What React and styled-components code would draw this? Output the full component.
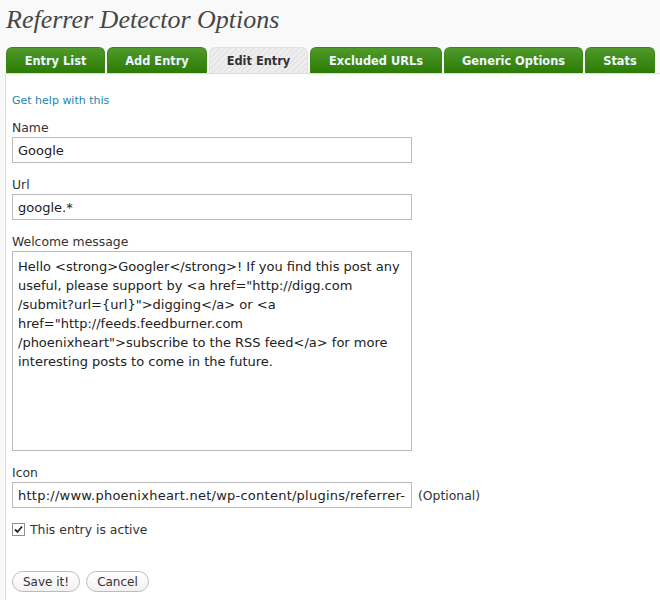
import React from "react";
import styled, { createGlobalStyle } from "styled-components";

const GlobalStyle = createGlobalStyle`
  body {
    margin: 0;
    background: #f9f9f9;
    font-family: "DejaVu Sans", Verdana, sans-serif;
    color: #333;
  }
`;

const Page = styled.div`
  width: 660px;
  height: 600px;
  overflow: hidden;
`;

const Title = styled.h2`
  margin: 0;
  padding: 5px 0 0 6px;
  height: 42px;
  box-sizing: border-box;
  font-family: "Liberation Serif", Georgia, serif;
  font-style: italic;
  font-weight: normal;
  font-size: 26px;
  color: #464646;
`;

const Tabs = styled.ul`
  display: flex;
  gap: 2px;
  list-style: none;
  margin: 5px 0 0 6px;
  padding: 0;
  height: 26px;
`;

const Tab = styled.li`
  width: ${(p) => p.$w}px;
  box-sizing: border-box;
  display: flex;
  align-items: center;
  justify-content: center;
  border-radius: 6px 6px 0 0;
  font-size: 11.4px;
  font-weight: bold;
  padding-top: 1px;
  color: ${(p) => (p.$active ? "#333" : "#eef6ff")};
  background: ${(p) =>
    p.$active
      ? "repeating-linear-gradient(135deg, #efefef 0 2px, #e6e6e6 2px 4px)"
      : "linear-gradient(#4f9a2b, #2d7a05)"};
  border: 1px solid ${(p) => (p.$active ? "#e2e2e2" : "#3b8514")};
  border-bottom: none;
`;

const Panel = styled.div`
  margin-left: 5px;
  background: #fff;
  border-top: 1px solid #dcdcdc;
  border-left: 1px solid #dcdcdc;
  padding: 19px 0 0 6px;
  height: 600px;
`;

const HelpLink = styled.a`
  display: block;
  font-size: 11px;
  line-height: 15px;
  color: #2583ad;
  text-decoration: none;
  margin-bottom: 12px;
`;

const Field = styled.div`
  margin-bottom: ${(p) => p.$mb ?? 14}px;
`;

const Label = styled.label`
  display: block;
  font-size: 12.4px;
  line-height: 15px;
  margin-bottom: 2px;
  color: #333;
`;

const Row = styled.div`
  display: flex;
  align-items: center;
  gap: 6px;
`;

const TextInput = styled.input`
  width: 400px;
  height: 26px;
  box-sizing: border-box;
  border: 1px solid #bbb;
  padding: 0 5px;
  font-family: inherit;
  font-size: 13px;
  color: #222;
  background: #fff;
  outline: none;
  letter-spacing: ${(p) => p.$spread ?? 0}px;
`;

const TextArea = styled.textarea`
  display: block;
  width: 400px;
  height: 200px;
  box-sizing: border-box;
  border: 1px solid #bbb;
  padding: 5px 5px;
  font-family: inherit;
  font-size: 13px;
  line-height: 19px;
  color: #222;
  resize: none;
  outline: none;
`;

const Hint = styled.span`
  font-size: 12.4px;
  color: #333;
`;

const CheckRow = styled.label`
  display: flex;
  align-items: center;
  gap: 5px;
  font-size: 12.4px;
  color: #333;
  margin-bottom: 34px;
`;

const Box = styled.span`
  width: 11px;
  height: 11px;
  border: 1px solid #8f8f8f;
  background: #fff;
  display: flex;
  align-items: center;
  justify-content: center;
`;

const Buttons = styled.div`
  display: flex;
  gap: 6px;
`;

const Button = styled.button`
  height: 21px;
  padding: 0 10px;
  border: 1px solid #bbb;
  border-radius: 11px;
  background: linear-gradient(#fff, #f2f2f2);
  font-family: inherit;
  font-size: 12px;
  color: #333;
`;

const message =
  'Hello <strong>Googler</strong>! If you find this post any useful, please support by <a href="http://digg.com /submit?url={url}">digging</a> or <a href="http://feeds.feedburner.com /phoenixheart">subscribe to the RSS feed</a> for more interesting posts to come in the future.';

const tabs = [
  { label: "Entry List", w: 99 },
  { label: "Add Entry", w: 100 },
  { label: "Edit Entry", w: 99, active: true },
  { label: "Excluded URLs", w: 132 },
  { label: "Generic Options", w: 139 },
  { label: "Stats", w: 70 },
];

export default function App() {
  return (
    <Page>
      <GlobalStyle />
      <Title>Referrer Detector Options</Title>
      <Tabs>
        {tabs.map((t) => (
          <Tab key={t.label} $w={t.w} $active={t.active}>
            {t.label}
          </Tab>
        ))}
      </Tabs>
      <Panel>
        <HelpLink href="#">Get help with this</HelpLink>
        <Field>
          <Label>Name</Label>
          <TextInput defaultValue="Google" />
        </Field>
        <Field>
          <Label>Url</Label>
          <TextInput defaultValue="google.*" />
        </Field>
        <Field>
          <Label>Welcome message</Label>
          <TextArea defaultValue={message} spellCheck={false} />
        </Field>
        <Field>
          <Label>Icon</Label>
          <Row>
            <TextInput
              $spread={0.25}
              defaultValue="http://www.phoenixheart.net/wp-content/plugins/referrer-detector/images/google.png"
            />
            <Hint>(Optional)</Hint>
          </Row>
        </Field>
        <CheckRow>
          <Box>
            <svg width="9" height="9" viewBox="0 0 9 9">
              <path d="M1 4.5 L3.5 7 L8 1.5" fill="none" stroke="#222" strokeWidth="1.8" />
            </svg>
          </Box>
          This entry is active
        </CheckRow>
        <Buttons>
          <Button>Save it!</Button>
          <Button>Cancel</Button>
        </Buttons>
      </Panel>
    </Page>
  );
}
